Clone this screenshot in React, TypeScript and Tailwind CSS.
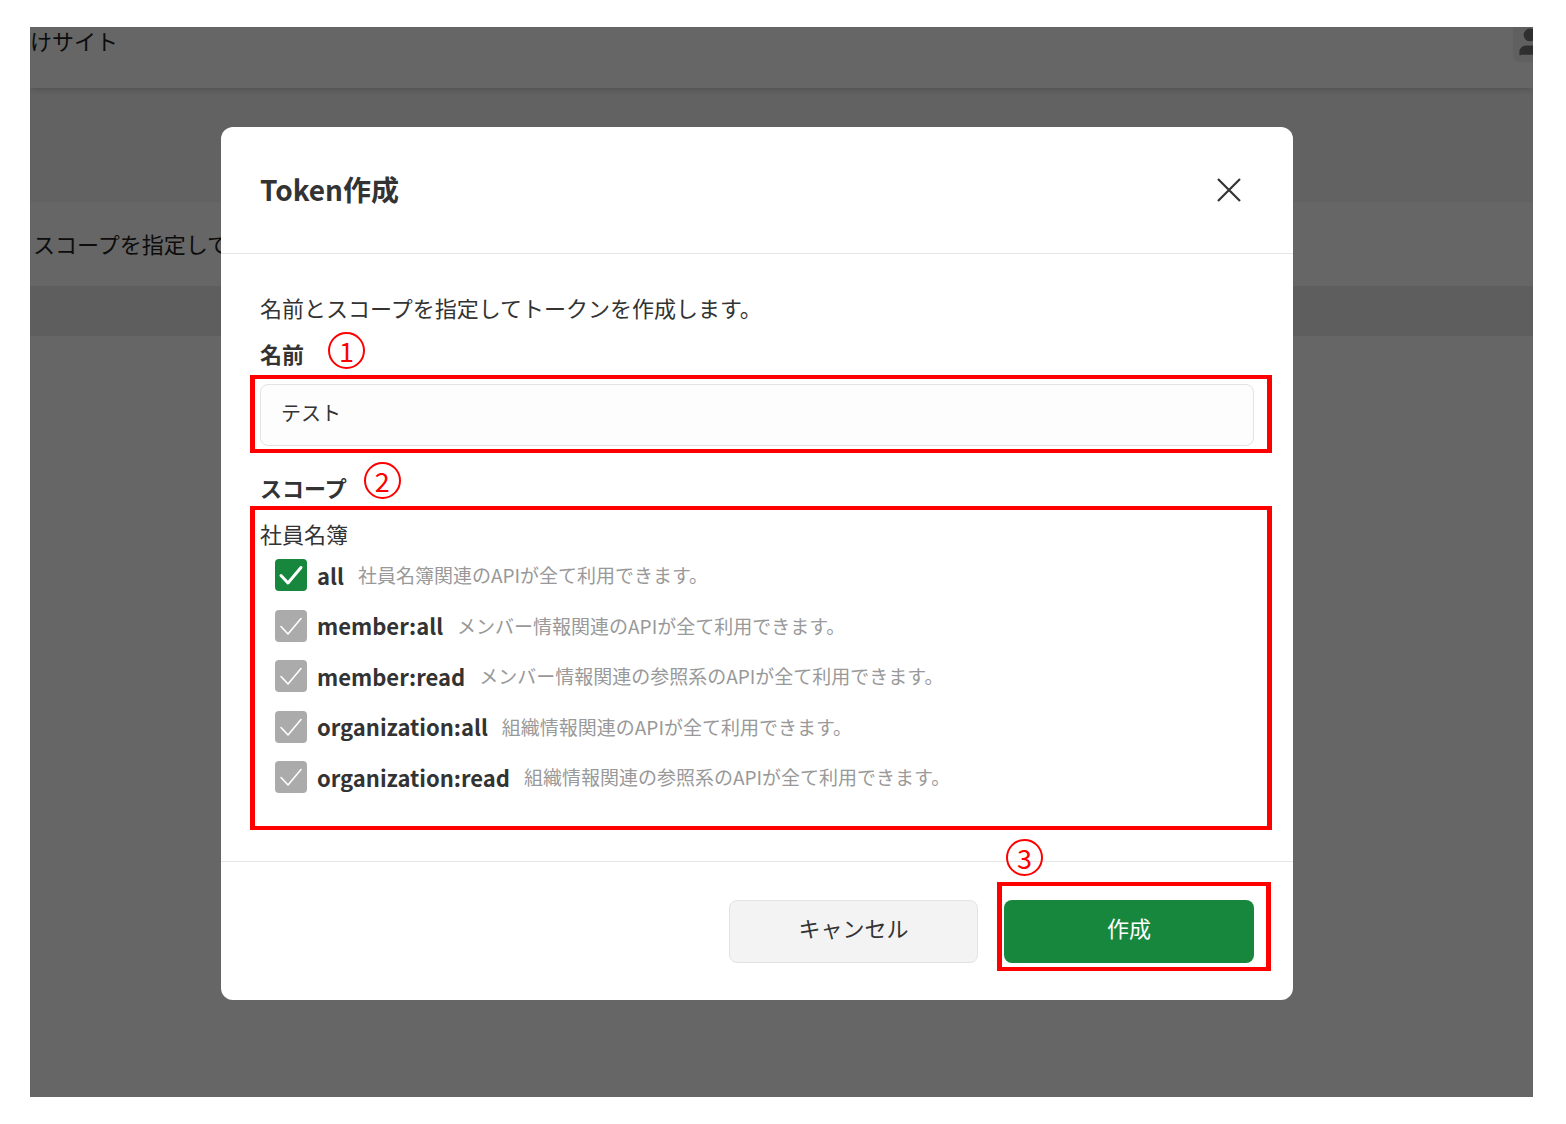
import { User } from "lucide-react";

interface Scope {
  name: string;
  desc: string;
  checked: boolean;
}

const scopes: Scope[] = [
  { name: "all", desc: "社員名簿関連のAPIが全て利用できます。", checked: true },
  { name: "member:all", desc: "メンバー情報関連のAPIが全て利用できます。", checked: false },
  { name: "member:read", desc: "メンバー情報関連の参照系のAPIが全て利用できます。", checked: false },
  { name: "organization:all", desc: "組織情報関連のAPIが全て利用できます。", checked: false },
  { name: "organization:read", desc: "組織情報関連の参照系のAPIが全て利用できます。", checked: false },
];

function Circled({ n, className = "" }: { n: number; className?: string }) {
  return (
    <span
      className={`flex h-[37px] w-[37px] shrink-0 items-center justify-center rounded-full border-2 border-[#ff0000] text-[27px] leading-none text-[#ff0000] ${className}`}
    >
      {n}
    </span>
  );
}

function CheckBox({ active }: { active: boolean }) {
  return (
    <span
      className={`flex h-[32px] w-[32px] shrink-0 items-center justify-center rounded-[4px] ${
        active ? "bg-[#17873d]" : "bg-[#ababab]"
      }`}
    >
      <svg width="32" height="32" viewBox="0 0 32 32" fill="none">
        <path
          d="M6 16.5L13 24L26 8.5"
          stroke="white"
          strokeWidth={active ? 3 : 1.6}
          strokeLinecap="round"
          strokeLinejoin="round"
        />
      </svg>
    </span>
  );
}

export default function App() {
  return (
    <div className="min-h-[1124px] bg-white pl-[30px] pt-[27px] font-['Noto_Sans_CJK_JP',sans-serif] text-[#333]">
      <div className="relative h-[1070px] w-[1503px] overflow-hidden bg-white">
        {/* Background page */}
        <header className="relative z-10 flex h-[61px] items-start justify-between bg-white pt-[1px] shadow-md">
          <span className="text-[22px] leading-[24px] text-[#222]">けサイト</span>
          <div className="-mr-[14px] -mt-[1px] flex h-[35px] w-[34px] items-end justify-center overflow-hidden rounded-bl-[6px] bg-[#f0f0f0]">
            <User className="h-[40px] w-[40px] text-[#777]" fill="#777" strokeWidth={1} />
          </div>
        </header>
        <div className="h-[114px] bg-[#f5f5f5]" />
        <div className="flex h-[84px] items-center pb-[2px] pl-[3px] text-[22px] text-[#222]">
          スコープを指定してトークンを作成します。
        </div>
        <div className="h-[50px] bg-[#ebebeb]" />

        {/* Overlay */}
        <div className="absolute inset-0 z-20 bg-black/60 pl-[191px] pt-[100px]">
          <div className="w-[1072px] rounded-[12px] bg-white">
            {/* Header */}
            <div className="flex h-[127px] items-center justify-between border-b border-[#e6e6e6] pl-[39px] pr-[52px]">
              <h2 className="pb-[2px] text-[28px] font-bold leading-none text-[#333]">Token作成</h2>
              <svg width="24" height="24" viewBox="0 0 24 24" fill="none">
                <path d="M1 1L23 23M23 1L1 23" stroke="#333" strokeWidth="2.2" />
              </svg>
            </div>

            {/* Body */}
            <div className="px-[39px] pb-[31px] pt-[37px]">
              <p className="text-[22px] leading-[32px]">名前とスコープを指定してトークンを作成します。</p>

              <div className="mt-[14px] flex h-[32px] items-center">
                <span className="text-[22px] font-bold leading-[32px]">名前</span>
                <Circled n={1} className="mb-[6px] ml-[24px]" />
              </div>

              <div className="relative mt-[15px]">
                <div className="flex h-[62px] items-center rounded-[8px] border border-[#e3e3e3] bg-[#fdfdfd] px-[20px] pb-[4px] text-[20px]">
                  テスト
                </div>
                <div className="absolute -bottom-[7px] -left-[10px] -right-[18px] -top-[9px] border-x-[5px] border-y-[4px] border-[#ff0000]" />
              </div>

              <div className="mt-[25px] flex h-[32px] items-center">
                <span className="text-[22px] font-bold leading-[32px]">スコープ</span>
                <Circled n={2} className="mb-[14px] ml-[17px]" />
              </div>

              <div className="relative mt-[3px] pb-[27px] pt-[11px]">
                <p className="mb-[1px] text-[22px] leading-[32px]">社員名簿</p>
                {scopes.map((s) => (
                  <div key={s.name} className="flex h-[50.5px] items-center pl-[15px]">
                    <CheckBox active={s.checked} />
                    <span className="ml-[10px] text-[22px] font-bold text-[#333]">{s.name}</span>
                    <span className="ml-[14px] text-[19px] text-[#999]">{s.desc}</span>
                  </div>
                ))}
                <div className="absolute -left-[10px] -right-[18px] bottom-0 top-0 border-x-[5px] border-y-[4px] border-[#ff0000]" />
              </div>
            </div>

            {/* Footer */}
            <div className="flex justify-end gap-[26px] border-t border-[#e6e6e6] pb-[37px] pr-[39px] pt-[38px]">
              <button className="h-[63px] w-[249px] rounded-[8px] border border-[#e3e3e3] bg-[#f3f3f3] pb-[8px] text-[22px] text-[#333]">
                キャンセル
              </button>
              <div className="relative">
                <button className="h-[63px] w-[250px] rounded-[8px] bg-[#17873d] pb-[8px] text-[22px] text-white">
                  作成
                </button>
                <Circled n={3} className="absolute -top-[61px] left-[2px]" />
                <div className="absolute -bottom-[8px] -left-[7px] -right-[17px] -top-[18px] border-x-[5px] border-y-[4px] border-[#ff0000]" />
              </div>
            </div>
          </div>
        </div>
      </div>
    </div>
  );
}
